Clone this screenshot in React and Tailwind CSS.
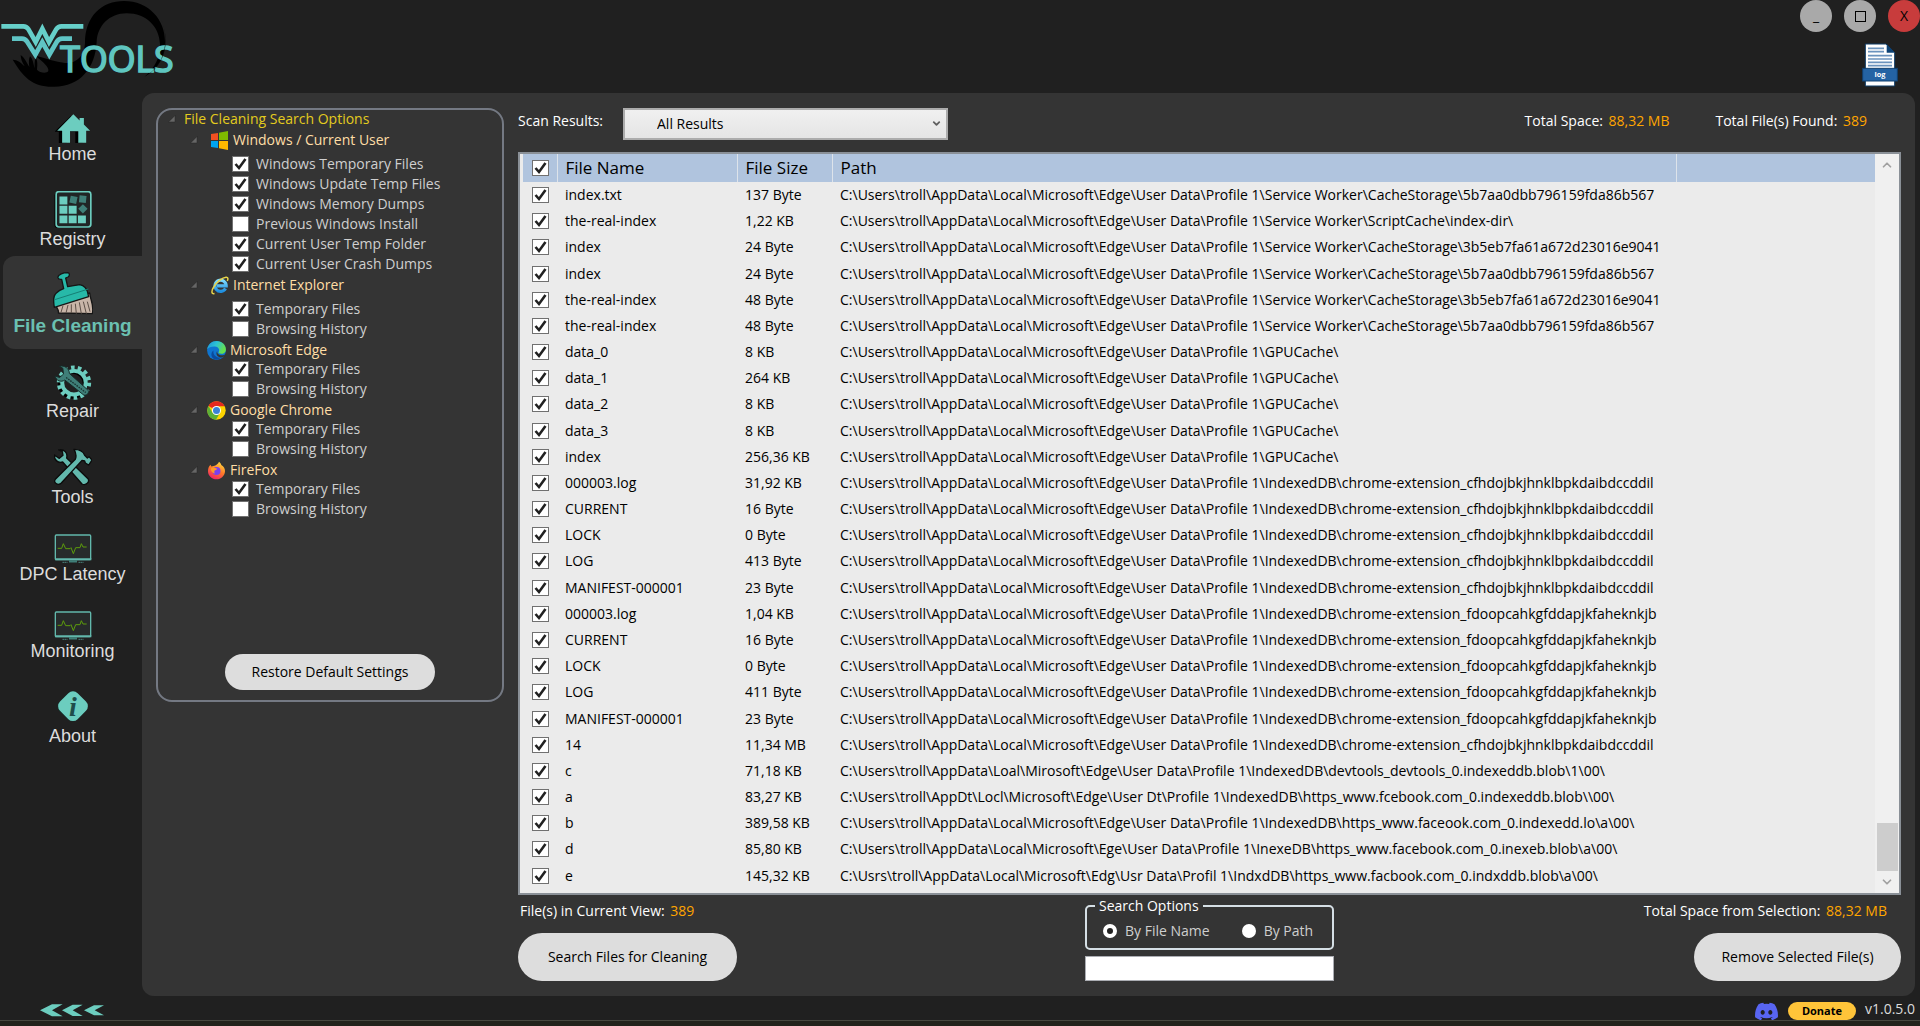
import React, { useState } from "react";
import { FaDiscord } from "react-icons/fa";
import { ChevronDown, ChevronUp } from "lucide-react";

const EDGE = "C:\\Users\\troll\\AppData\\Local\\Microsoft\\Edge\\User Data\\Profile 1\\";
const CACHE_A = EDGE + "Service Worker\\CacheStorage\\5b7aa0dbb796159fda86b567";
const CACHE_B = EDGE + "Service Worker\\CacheStorage\\3b5eb7fa61a672d23016e9041";
const GPU = EDGE + "GPUCache\\";
const EXT_A = EDGE + "IndexedDB\\chrome-extension_cfhdojbkjhnklbpkdaibdccddil";
const EXT_B = EDGE + "IndexedDB\\chrome-extension_fdoopcahkgfddapjkfaheknkjb";

const files = [
  ["index.txt", "137 Byte", CACHE_A],
  ["the-real-index", "1,22 KB", EDGE + "Service Worker\\ScriptCache\\index-dir\\"],
  ["index", "24 Byte", CACHE_B],
  ["index", "24 Byte", CACHE_A],
  ["the-real-index", "48 Byte", CACHE_B],
  ["the-real-index", "48 Byte", CACHE_A],
  ["data_0", "8 KB", GPU],
  ["data_1", "264 KB", GPU],
  ["data_2", "8 KB", GPU],
  ["data_3", "8 KB", GPU],
  ["index", "256,36 KB", GPU],
  ["000003.log", "31,92 KB", EXT_A],
  ["CURRENT", "16 Byte", EXT_A],
  ["LOCK", "0 Byte", EXT_A],
  ["LOG", "413 Byte", EXT_A],
  ["MANIFEST-000001", "23 Byte", EXT_A],
  ["000003.log", "1,04 KB", EXT_B],
  ["CURRENT", "16 Byte", EXT_B],
  ["LOCK", "0 Byte", EXT_B],
  ["LOG", "411 Byte", EXT_B],
  ["MANIFEST-000001", "23 Byte", EXT_B],
  ["14", "11,34 MB", EXT_A],
  ["c", "71,18 KB", "C:\\Users\\troll\\AppData\\Loal\\Mirosoft\\Edge\\User Data\\Profile 1\\IndexedDB\\devtools_devtools_0.indexeddb.blob\\1\\00\\"],
  ["a", "83,27 KB", "C:\\Users\\troll\\AppDt\\Locl\\Microsoft\\Edge\\User Dt\\Profile 1\\IndexedDB\\https_www.fcebook.com_0.indexeddb.blob\\\\00\\"],
  ["b", "389,58 KB", EDGE + "IndexedDB\\https_www.faceook.com_0.indexedd.lo\\a\\00\\"],
  ["d", "85,80 KB", "C:\\Users\\troll\\AppData\\Local\\Microsoft\\Ege\\User Data\\Profile 1\\InexeDB\\https_www.facebook.com_0.inexeb.blob\\a\\00\\"],
  ["e", "145,32 KB", "C:\\Usrs\\troll\\AppData\\Local\\Microsoft\\Edg\\Usr Data\\Profil 1\\IndxdDB\\https_www.facbook.com_0.indxddb.blob\\a\\00\\"],
];

/* ---------- sidebar icons ---------- */

const HomeIcon = () => (
  <svg width="36" height="29" viewBox="162 340 108 88">
    <path d="M209 346 160 394h13v38h24v-38h26v38h22V394z" fill="#000" />
    <path d="M217 341 168 391h15v36h24v-35h25v35h24v-36h12l-19-19v-20h-13v8z" fill="#6ccdbf" />
  </svg>
);

const RegistryIcon = () => (
  <svg width="38" height="37" viewBox="160 573 114 112">
    <rect x="161" y="578" width="108" height="107" rx="9" fill="#000" />
    <rect x="166" y="575" width="105" height="107" rx="8" fill="#202525" stroke="#6ccdbf" strokeWidth="5" />
    <g fill="#6ccdbf">
      <path d="M176 590h24v24h-24zM176 618h24v24h-24zM204 618h24v24h-24zM176 647h24v24h-24zM204 647h24v24h-24zM232 647h24v24h-24z" />
    </g>
    <g fill="#3f7f78">
      <rect x="208" y="589" width="21" height="21" transform="rotate(12 218 599)" />
      <rect x="236" y="587" width="21" height="21" transform="rotate(6 246 597)" />
      <rect x="237" y="617" width="20" height="20" transform="rotate(45 247 627)" />
    </g>
  </svg>
);

const BroomIcon = () => (
  <svg width="40" height="43" viewBox="158 817 120 129">
    <g stroke="#161616" strokeWidth="4" strokeLinejoin="round">
      <path d="M164 912 268 880c2 22 14 36 8 62l-102-2c4-8-8-18-10-28z" fill="#c8b5a8" />
      <path d="M173 834c-2-9 14-15 30-15 6 2 5 10 0 13l-7 3 6 26 36-6c14 2 22 12 25 28l2 8-103 32c-4-22-4-34 6-43 6-6 12-10 22-13l-6-28c-6 1-10-1-11-5z" fill="#27b9a8" />
    </g>
    <path d="M163 900 264 868" stroke="#157f75" strokeWidth="3" />
    <path d="m182 938 6-20M197 940l6-24M213 940l0-26M228 942l-3-30M243 942l-6-34M258 942l-9-36M269 936l-8-30" stroke="#5d5048" strokeWidth="3" fill="none" />
  </svg>
);

const RepairIcon = () => (
  <svg width="38" height="35" viewBox="160 72 114 107">
    <circle cx="216" cy="130" r="38" fill="none" stroke="#000" strokeWidth="14" />
    <circle cx="220" cy="126" r="36" fill="none" stroke="#6ccdbf" strokeWidth="12" />
    <circle cx="220" cy="126" r="46" fill="none" stroke="#6ccdbf" strokeWidth="13" strokeDasharray="11 9.64" />
    <path d="M176 76c14-4 30 6 30 22l58 52c2 8-4 16-14 14l-58-46c-12 8-26 2-30-12l14 4 12-10-2-18z" fill="#3f7f78" stroke="#152c2a" strokeWidth="3" />
    <path d="m196 110 60 46" stroke="#173431" strokeWidth="4" strokeDasharray="5 3" />
  </svg>
);

const ToolsIcon = () => (
  <svg width="38" height="38" viewBox="160 326 114 114">
    <g stroke="#0c0c0c" strokeWidth="4" strokeLinejoin="round">
      <path d="M174 332c16-4 28 8 24 24l64 62c6 10-6 22-18 16l-58-66c-14 4-26-6-25-21l15 10 11-9-2-11z" fill="#62b8ac" />
      <path d="m164 420 60-60c4-10 2-20-4-30 18 0 28 6 32 18l8 8 5-4 9 10-10 15-10-6-2-6-8-2-62 68c-10 10-26-2-18-11z" fill="#62b8ac" />
    </g>
  </svg>
);

const MonitorIcon = () => (
  <svg width="38" height="29" viewBox="160 583 114 87">
    <rect x="164" y="586" width="106" height="74" rx="3" fill="#272b2b" stroke="#62b8ac" strokeWidth="4" />
    <path d="M163 659h109" stroke="#62b8ac" strokeWidth="6" />
    <path d="M205 665h24" stroke="#3f7f78" strokeWidth="7" />
    <path d="M186 668h14M234 668h14" stroke="#62b8ac" strokeWidth="3" strokeDasharray="3 3" />
    <path d="M171 626h12l5-14 7 15h13l3-3 7 18 7-18h13l4-12 5 10h11" fill="none" stroke="#5c9c0c" strokeWidth="3" />
  </svg>
);

const AboutIcon = () => (
  <svg width="36" height="37" viewBox="163 1045 110 110">
    <rect x="178" y="1062" width="76" height="76" rx="20" transform="rotate(45 216 1100)" fill="#14302d" />
    <rect x="180" y="1061" width="76" height="76" rx="20" transform="rotate(45 218 1099)" fill="#6ccdbf" />
    <text x="218" y="1128" textAnchor="middle" fontFamily="Liberation Serif, serif" fontSize="86" fontWeight="bold" fontStyle="italic" fill="#1f4d4b">i</text>
  </svg>
);

const navItems = [
  { label: "Home", icon: HomeIcon },
  { label: "Registry", icon: RegistryIcon },
  { label: "File Cleaning", icon: BroomIcon, active: true },
  { label: "Repair", icon: RepairIcon },
  { label: "Tools", icon: ToolsIcon },
  { label: "DPC Latency", icon: MonitorIcon },
  { label: "Monitoring", icon: MonitorIcon },
  { label: "About", icon: AboutIcon },
];

/* ---------- tree icons ---------- */

const WindowsIcon = () => (
  <svg width="18" height="19" viewBox="0 0 18 19">
    <path d="M0 3 7 2v7H0z" fill="#f25022" />
    <path d="M8 1.800 17 0v9H8z" fill="#7fba00" />
    <path d="M0 10h7v7l-7-1z" fill="#00a4ef" />
    <path d="M8 10h9v9l-9-1.800z" fill="#ffb900" />
  </svg>
);

const IeIcon = () => (
  <svg width="18" height="19" viewBox="0 0 18 19">
    <defs>
      <linearGradient id="ie" x1="0" y1="0" x2="0" y2="1">
        <stop offset="0" stopColor="#7fdcff" />
        <stop offset="1" stopColor="#1f8fe0" />
      </linearGradient>
    </defs>
    <path d="M14.500 12.500A5.600 5.600 0 1 1 15.200 9.800H6" fill="none" stroke="url(#ie)" strokeWidth="3.200" />
    <path d="M3.500 17.600C0 18.500.3 14.500 3 10.500 6 5.500 11.500 1.500 15 1.200c2.200-.2 2.300 1.800 1.300 3.800" fill="none" stroke="#e8d44a" strokeWidth="1.500" />
  </svg>
);

const EdgeIcon = () => (
  <svg width="19" height="19" viewBox="0 0 19 19">
    <defs>
      <linearGradient id="edgeTop" x1="0" y1="0" x2="1" y2="0.400">
        <stop offset="0" stopColor="#1c8fd8" />
        <stop offset="0.500" stopColor="#2cc3d4" />
        <stop offset="1" stopColor="#66e04c" />
      </linearGradient>
    </defs>
    <circle cx="9.500" cy="9.500" r="9.400" fill="#0f74cf" />
    <path d="M.2 8.500C1 3.500 4.800.1 9.500.1c5.600 0 9.400 4 9.400 8.300 0 3-2.400 4.400-4.600 4.400-2 0-3.100-.8-2.700-1.500 1.700-2.600-.4-5.600-3.600-5.800C4.500 5.300 1.300 6.200.2 8.500z" fill="url(#edgeTop)" />
    <path d="M6.500 9.500c-.8 4.500 3 8 8 6.800-1.600 1.800-4 2.500-6 2.300C4 17.500 3 12 6.500 9.500z" fill="#0c4a9c" />
    <path d="M10.300 10c-.6 2.400 1.500 4.300 4.500 4.300 1.600 0 3-.6 3.600-1.100-.6 1.500-1.800 2.600-3 3.200-4.600.8-7.400-3.400-5.100-6.400z" fill="#343434" />
  </svg>
);

const ChromeIcon = () => (
  <svg width="19" height="19" viewBox="0 0 19 19">
    <circle cx="9.500" cy="9.500" r="9.200" fill="#fdd400" />
    <path d="M9.500 9.500 1.500 4.900A9.200 9.200 0 0 1 17.500 4.900L17.600 5.200H9.500z" fill="#e5281f" />
    <path d="M1.500 4.900A9.200 9.200 0 0 0 9 18.700l4-7-3.500-2.200-4 2.300z" fill="#5cb038" />
    <circle cx="9.500" cy="9.500" r="4.500" fill="#fff" />
    <circle cx="9.500" cy="9.500" r="3.500" fill="#3b82d6" />
  </svg>
);

const FirefoxIcon = () => (
  <svg width="19" height="19" viewBox="0 0 19 19">
    <defs>
      <linearGradient id="fox" x1="0.800" y1="0" x2="0.300" y2="1">
        <stop offset="0" stopColor="#ffe040" />
        <stop offset="0.500" stopColor="#ff7a28" />
        <stop offset="1" stopColor="#f0206a" />
      </linearGradient>
    </defs>
    <path d="M12 .8c1.200 1.200 2 2 2.300 3.200 2.600 1.400 3.800 3.800 3.700 6.200-.2 4.500-4 8.100-8.500 8.100S1 14.800 1 10.200c0-2.400.6-4.700 2.400-6.400l1 1.600 3.200-.6c1.600-.6 3.600-2 4.400-4z" fill="url(#fox)" />
    <circle cx="9.500" cy="10" r="4" fill="#7b3ff0" />
    <path d="M3.800 7.500c1.500-1.200 3.500-1.300 5-.3l1.500.6c0 1-2 1.200-2.600 1.800-.8 1-.3 2 .3 2.800-2.400 0-4.200-2-4.200-4.900z" fill="#ff9a2a" />
  </svg>
);

const groups = [
  {
    label: "Windows / Current User",
    icon: WindowsIcon,
    tall: true,
    items: [
      ["Windows Temporary Files", true],
      ["Windows Update Temp Files", true],
      ["Windows Memory Dumps", true],
      ["Previous Windows Install", false],
      ["Current User Temp Folder", true],
      ["Current User Crash Dumps", true],
    ],
  },
  { label: "Internet Explorer", icon: IeIcon, tall: true, items: [["Temporary Files", true], ["Browsing History", false]] },
  { label: "Microsoft Edge", icon: EdgeIcon, items: [["Temporary Files", true], ["Browsing History", false]] },
  { label: "Google Chrome", icon: ChromeIcon, items: [["Temporary Files", true], ["Browsing History", false]] },
  { label: "FireFox", icon: FirefoxIcon, items: [["Temporary Files", true], ["Browsing History", false]] },
];

/* ---------- small parts ---------- */

const CheckBox = ({ checked, label }) => (
  <span className="relative block h-4 w-[17px] shrink-0">
    <input
      type="checkbox"
      defaultChecked={checked}
      aria-label={label}
      className="peer block h-4 w-[17px] appearance-none border border-[#707070] bg-white"
    />
    <svg className="pointer-events-none absolute inset-0 hidden peer-checked:block" width="17" height="16" viewBox="0 0 17 16">
      <path d="M3.500 8 7 12 13.500 3" fill="none" stroke="#212121" strokeWidth="2.600" />
    </svg>
  </span>
);

const Arrow = () => (
  <svg width="8" height="8" viewBox="0 0 8 8" className="shrink-0">
    <path d="M7 .5v6.500H.5z" fill="#666" stroke="#262626" strokeWidth="0.500" />
  </svg>
);

const Logo = () => (
  <svg width="180" height="90" viewBox="0 0 540 270" role="img" aria-label="W Tools">
    <path
      d="M38 179c14 0 26 10 36 20-8-12-12-24-12-34 10 6 18 22 26 36-2-14-2-24 2-32 8 6 10 22 14 36 0-12-1-22 3-30 7 6 5 24 4 34 8 10 30 12 34 4 2-14-16-26-38-46 30 8 60 18 88 22 34 2 58-20 60-60 0-80 50-126 117-126 74 0 124 56 123 124 0 46-24 82-62 104 32-28 48-58 47-98-2-54-42-93-100-93-52 0-88 38-90 86-4 78-50 134-127 134C98 262 70 232 38 179z"
      fill="#000"
    />
    <text x="181" y="216" fontFamily="Open Sans, sans-serif" fontSize="107" fill="#5fc6c0" stroke="#5fc6c0" strokeWidth="5">
      TOOLS
    </text>
    <path d="M484 60c14 30 18 78 0 116-12 24-28 40-46 52 38-22 58-60 59-104 0-26-6-48-13-64z" fill="#000" />
    <g fill="none" strokeWidth="14" strokeLinejoin="miter">
      <path d="M4 79h66c10 0 12 4 16 10l21 37 20-40 20 40 21-37c4-6 6-10 16-10h66" stroke="#66cfc9" />
      <path d="M36 116h30c10 0 12 4 16 10l24 38 21-38 21 38 22-38c4-6 6-10 16-10h30" stroke="#5fc4c4" />
    </g>
  </svg>
);

const LogIcon = () => (
  <svg width="36" height="44" viewBox="0 0 108 132">
    <path d="M10 3h62l26 26v100H10z" fill="#fff" stroke="#0f3c66" strokeWidth="3" />
    <path d="M74 3v26h24z" fill="#0d4274" />
    <path d="M18 16h48M18 26h48M18 38h72M18 48h72M18 58h72M18 68h72" stroke="#6b93bd" strokeWidth="5" />
    <rect x="2" y="76" width="104" height="38" fill="#2463a4" stroke="#10406f" strokeWidth="3" />
    <text x="54" y="101" textAnchor="middle" fontFamily="Open Sans, sans-serif" fontSize="22" fontWeight="700" fill="#fff">
      log
    </text>
  </svg>
);

const pill = "rounded-full bg-[#dddddd] text-sm text-black hover:bg-white";

const App = () => {
  const [query, setQuery] = useState("");
  const [mode, setMode] = useState("name");

  return (
    <div className="flex h-screen flex-col bg-[#202020] font-['Open_Sans','Noto_Sans',sans-serif] text-sm leading-[22px] text-white">
      <header className="flex h-[93px] shrink-0 items-start justify-between">
        <Logo />
        <div className="flex flex-col items-end">
          <div className="flex gap-3">
            <button aria-label="Minimize" className="h-8 w-8 rounded-full bg-[#a9a9a9] text-black">_</button>
            <button aria-label="Maximize" className="flex h-8 w-8 items-center justify-center rounded-full bg-[#a9a9a9]">
              <span className="h-[11px] w-[11px] border border-black" />
            </button>
            <button aria-label="Close" className="h-8 w-8 rounded-full bg-[#c83c3c] text-black">X</button>
          </div>
          <button aria-label="Open log" className="mt-[11px] mr-[22px]">
            <LogIcon />
          </button>
        </div>
      </header>

      <div className="flex min-h-0 flex-1">
        <nav className="flex w-[142px] shrink-0 flex-col pt-[5px] pl-[3px] font-['Liberation_Sans',Arial,sans-serif] text-lg">
          {navItems.map(({ label, icon: Icon, active }) => (
            <button
              key={label}
              className={
                active
                  ? "-mt-1 flex flex-col items-center rounded-l-xl bg-[#343434] pt-4 pb-3 text-[19px] font-bold text-[#6bc0b1]"
                  : "flex flex-col items-center pt-4 pb-2.5 text-[#dcdcdc] hover:text-white"
              }
            >
              <Icon />
              <span className="leading-[22px]">{label}</span>
            </button>
          ))}
        </nav>

        <main className="mr-[5px] flex min-w-0 flex-1 gap-3.5 rounded-xl bg-[#343434] px-3.5 py-[15px]">
          <section className="flex h-[594px] w-[348px] shrink-0 flex-col rounded-2xl border-2 border-[#747983] pb-2.5">
            <div className="-mt-px flex h-5 items-center gap-2 pl-2.5 text-[#e3cb1e]">
              <Arrow />
              File Cleaning Search Options
            </div>
            {groups.map(({ label, icon: Icon, tall, items }) => (
              <div key={label}>
                <div className={tall ? "flex h-[25px] items-start pl-8" : "flex h-5 items-start pl-8"}>
                  <div className="flex h-[22px] items-center text-[#ffdea6]">
                    <Arrow />
                    <span className={tall ? "mr-1 ml-[13px]" : "mr-1 ml-[9px]"}>
                      <Icon />
                    </span>
                    {label}
                  </div>
                </div>
                {items.map(([name, on]) => (
                  <label key={name} className="flex h-5 items-center gap-[7px] pl-[74px] text-[#cfcfcf]">
                    <CheckBox checked={on} />
                    {name}
                  </label>
                ))}
              </div>
            ))}
            <button className={`${pill} mx-auto mt-auto h-9 w-[210px]`}>Restore Default Settings</button>
          </section>

          <section className="flex min-w-0 flex-1 flex-col">
            <div className="flex h-8 shrink-0 items-center">
              <label htmlFor="results" className="-mt-1.5 w-[105px]">Scan Results:</label>
              <div className="relative">
                <select
                  id="results"
                  className="h-8 w-[325px] appearance-none border-2 border-[#acacac] bg-linear-to-b from-[#f0f0f0] to-[#e5e5e5] pl-8 text-sm text-black"
                >
                  <option>All Results</option>
                </select>
                <ChevronDown className="pointer-events-none absolute top-2.5 right-1.5 text-[#606060]" size={11} strokeWidth={4} />
              </div>
              <div className="-mt-1.5 mr-[34px] ml-auto flex gap-[46px]">
                <p>Total Space: <span className="ml-0.5 text-[#ffa500]">88,32 MB</span></p>
                <p>Total File(s) Found: <span className="ml-0.5 text-[#ffa500]">389</span></p>
              </div>
            </div>

            <div className="mt-3 flex min-h-0 flex-1 overflow-hidden border-2 border-[#8a9097] bg-[#ebebeb] pl-[3px] text-black">
              <div className="min-w-0 flex-1 pb-1">
                <table className="h-full w-full table-fixed border-collapse text-left">
                  <colgroup>
                    <col className="w-[34px]" />
                    <col className="w-[180px]" />
                    <col className="w-[95px]" />
                    <col className="w-[844px]" />
                    <col />
                  </colgroup>
                  <thead>
                    <tr className="h-7 bg-[#b0c4de] text-[17px]">
                      <th className="border-r border-[#dde3ea] pl-[9px]"><CheckBox checked label="Select all files" /></th>
                      <th className="border-r border-[#dde3ea] pl-2 font-normal">File Name</th>
                      <th className="border-r border-[#dde3ea] pl-2 font-normal">File Size</th>
                      <th className="border-r border-[#dde3ea] pl-2 font-normal">Path</th>
                      <th />
                    </tr>
                  </thead>
                  <tbody>
                    {files.map(([name, size, path], i) => (
                      <tr key={i} className="h-[26px]">
                        <td className="pl-[9px]"><CheckBox checked label={`Select ${name}`} /></td>
                        <td className="pl-2">{name}</td>
                        <td className="pl-2">{size}</td>
                        <td className="px-2">
                          <div className="overflow-hidden whitespace-nowrap">{path}</div>
                        </td>
                        <td />
                      </tr>
                    ))}
                  </tbody>
                </table>
              </div>
              <div className="flex w-6 shrink-0 flex-col items-center bg-[#f0f0f0] text-[#a0a0a0]">
                <ChevronUp className="mt-1" size={14} strokeWidth={3} />
                <div className="mt-auto h-12 w-[21px] bg-[#cdcdcd]" />
                <ChevronDown className="my-1" size={14} strokeWidth={3} />
              </div>
            </div>

            <div className="grid shrink-0 grid-cols-[1fr_249px_1fr] items-end">
              <div>
                <p className="mt-[5px] pl-0.5">File(s) in Current View: <span className="ml-0.5 text-[#ffa500]">389</span></p>
                <button className={`${pill} mt-[11px] h-12 w-[219px]`}>Search Files for Cleaning</button>
              </div>
              <div className="flex flex-col gap-1.5">
                <fieldset className="h-[55px] rounded-[5px] border-2 border-[#d5dfe5] pl-4">
                  <legend className="-ml-2 px-1">Search Options</legend>
                  <div className="flex gap-8 pt-[3px] text-[#cfcfcf]">
                    <label className="flex items-center gap-2">
                      <input
                        type="radio"
                        name="mode"
                        checked={mode === "name"}
                        onChange={() => setMode("name")}
                        className="h-3.5 w-3.5 appearance-none rounded-full bg-white checked:border-4 checked:border-white checked:bg-[#212121]"
                      />
                      By File Name
                    </label>
                    <label className="flex items-center gap-2">
                      <input
                        type="radio"
                        name="mode"
                        checked={mode === "path"}
                        onChange={() => setMode("path")}
                        className="h-3.5 w-3.5 appearance-none rounded-full bg-white checked:border-4 checked:border-white checked:bg-[#212121]"
                      />
                      By Path
                    </label>
                  </div>
                </fieldset>
                <input
                  type="text"
                  aria-label="Search files"
                  value={query}
                  onChange={(e) => setQuery(e.target.value)}
                  className="h-[25px] w-full border border-[#abadb3] bg-white px-1 text-black"
                />
              </div>
              <div className="flex flex-col items-end">
                <p className="mt-[5px] pr-3.5">Total Space from Selection: <span className="ml-0.5 text-[#ffa500]">88,32 MB</span></p>
                <button className={`${pill} mt-[11px] h-12 w-[207px]`}>Remove Selected File(s)</button>
              </div>
            </div>
          </section>
        </main>
      </div>

      <footer className="flex h-6 shrink-0 items-center justify-between pr-[5px] pl-10">
        <button aria-label="Collapse menu" className="mt-1">
          <svg width="65" height="13" viewBox="0 0 195 39">
            <path d="M0 19 36 1h32L36 19l32 18H36zM66 19 98 2h30L98 19l30 17H98zM132 19l30-15h30l-28 15 28 15h-30z" fill="#6ccdbf" />
          </svg>
        </button>
        <div className="flex h-6 items-end gap-[9px] overflow-hidden text-[#dcdcdc]">
          <a href="#discord" aria-label="Discord" className="-mb-1 text-[#5865f2]"><FaDiscord size={25} /></a>
          <a href="#donate" className="flex h-[18px] w-[68px] items-center justify-center rounded-full bg-[#ffc439] text-[11px] font-bold text-black">Donate</a>
          <span>v1.0.5.0</span>
        </div>
      </footer>
      <div className="h-1.5 shrink-0 border-t border-[#47473f] bg-[#22221b]" />
    </div>
  );
};

export default App;
